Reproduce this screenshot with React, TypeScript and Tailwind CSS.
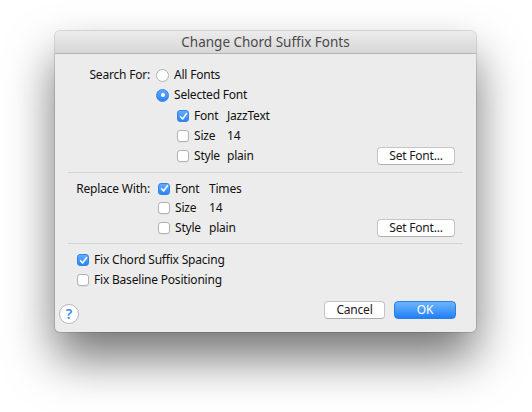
import React from "react";

function Check({ checked }: { checked?: boolean }) {
  if (checked) {
    return (
      <div className="w-[12px] h-[12px] rounded-[3px] bg-gradient-to-b from-[#62adfb] to-[#2a84f7] border border-[#3583e6] flex items-center justify-center shrink-0">
        <svg width="9" height="9" viewBox="0 0 9 9">
          <path d="M1.6 4.8 L3.6 7 L7.6 1.6" fill="none" stroke="#fff" strokeWidth="1.6" strokeLinecap="round" strokeLinejoin="round" />
        </svg>
      </div>
    );
  }
  return <div className="w-[12px] h-[12px] rounded-[3px] bg-white border border-[#b2b2b2] shadow-[0_1px_0_rgba(0,0,0,0.04)] shrink-0" />;
}

function Radio({ checked }: { checked?: boolean }) {
  if (checked) {
    return (
      <div className="w-[13px] h-[13px] rounded-full bg-gradient-to-b from-[#5eaafb] to-[#2a84f7] border border-[#3583e6] flex items-center justify-center shrink-0">
        <div className="w-[4px] h-[4px] rounded-full bg-white" />
      </div>
    );
  }
  return <div className="w-[13px] h-[13px] rounded-full bg-white border border-[#b2b2b2] shrink-0" />;
}

function Btn({ children, w }: { children: React.ReactNode; w: string }) {
  return (
    <div className={`${w} h-[18px] rounded-[4px] bg-white border border-[#c4c4c4] border-b-[#adadad] flex items-center justify-center text-[12px] text-[#1a1a1a]`}>
      {children}
    </div>
  );
}

export default function App() {
  return (
    <div className="w-[532px] h-[412px] bg-white pt-[31px] pl-[55px] font-['Noto_Sans',sans-serif] text-[12px] tracking-[-0.2px] text-[#111]">
      <div className="w-[421px] h-[301px] bg-[#ececec] rounded-[5px] flex flex-col shadow-[0_26px_48px_rgba(0,0,0,0.55),0_0_0_1px_rgba(0,0,0,0.12)]">
        <div className="h-[23px] rounded-t-[5px] bg-gradient-to-b from-[#ececec] to-[#d7d7d7] border-b border-[#b3b3b3] flex items-center justify-center text-[13.5px] tracking-normal text-[#4a4a4a]">
          Change Chord Suffix Fonts
        </div>

        <div className="pt-[11px]">
          <div className="flex h-[20px] items-center">
            <div className="w-[95px] text-right">Search For:</div>
            <div className="ml-[6px] flex items-center">
              <Radio />
              <span className="ml-[5px]">All Fonts</span>
            </div>
          </div>
          <div className="flex h-[20px] items-center pl-[101px]">
            <Radio checked />
            <span className="ml-[5px]">Selected Font</span>
          </div>
          <div className="pl-[122px] mt-[1px]">
            <div className="flex h-[20px] items-center">
              <Check checked />
              <span className="ml-[5px] w-[33px]">Font</span>
              <span>JazzText</span>
            </div>
            <div className="flex h-[20px] items-center">
              <Check />
              <span className="ml-[5px] w-[33px]">Size</span>
              <span>14</span>
            </div>
            <div className="flex h-[20px] items-center pr-[21px]">
              <Check />
              <span className="ml-[5px] w-[33px]">Style</span>
              <span>plain</span>
              <div className="ml-auto">
                <Btn w="w-[78px]">Set Font...</Btn>
              </div>
            </div>
          </div>
        </div>

        <div className="mx-[13px] mt-[6px] h-px bg-[#d4d4d4]" />

        <div className="mt-[6px]">
          <div className="flex h-[19px] items-center">
            <div className="w-[95px] text-right">Replace With:</div>
            <div className="ml-[8px] flex items-center">
              <Check checked />
              <span className="ml-[5px] w-[34px]">Font</span>
              <span>Times</span>
            </div>
          </div>
          <div className="flex h-[20px] items-center pl-[103px]">
            <Check />
            <span className="ml-[5px] w-[34px]">Size</span>
            <span>14</span>
          </div>
          <div className="flex h-[20px] items-center pl-[103px] pr-[21px]">
            <Check />
            <span className="ml-[5px] w-[34px]">Style</span>
            <span>plain</span>
            <div className="ml-auto">
              <Btn w="w-[78px]">Set Font...</Btn>
            </div>
          </div>
        </div>

        <div className="mx-[13px] mt-[5px] h-px bg-[#d4d4d4]" />

        <div className="mt-[6px] pl-[22px]">
          <div className="flex h-[20px] items-center">
            <Check checked />
            <span className="ml-[5px]">Fix Chord Suffix Spacing</span>
          </div>
          <div className="flex h-[20px] items-center">
            <Check />
            <span className="ml-[5px]">Fix Baseline Positioning</span>
          </div>
        </div>

        <div className="mt-[11px] flex items-start pr-[20px]">
          <div className="ml-[4px] mt-[3px] w-[20px] h-[20px] rounded-full bg-white border border-[#b8b8b8] flex items-center justify-center text-[14px] font-semibold text-[#3a8ef6] leading-none">
            ?
          </div>
          <div className="ml-auto flex gap-[9px]">
            <Btn w="w-[61px]">Cancel</Btn>
            <div className="w-[62px] h-[18px] rounded-[4px] bg-gradient-to-b from-[#6db5fb] to-[#1c7ff7] border border-[#2a7ee8] flex items-center justify-center text-[12px] text-white">
              OK
            </div>
          </div>
        </div>
      </div>
    </div>
  );
}
